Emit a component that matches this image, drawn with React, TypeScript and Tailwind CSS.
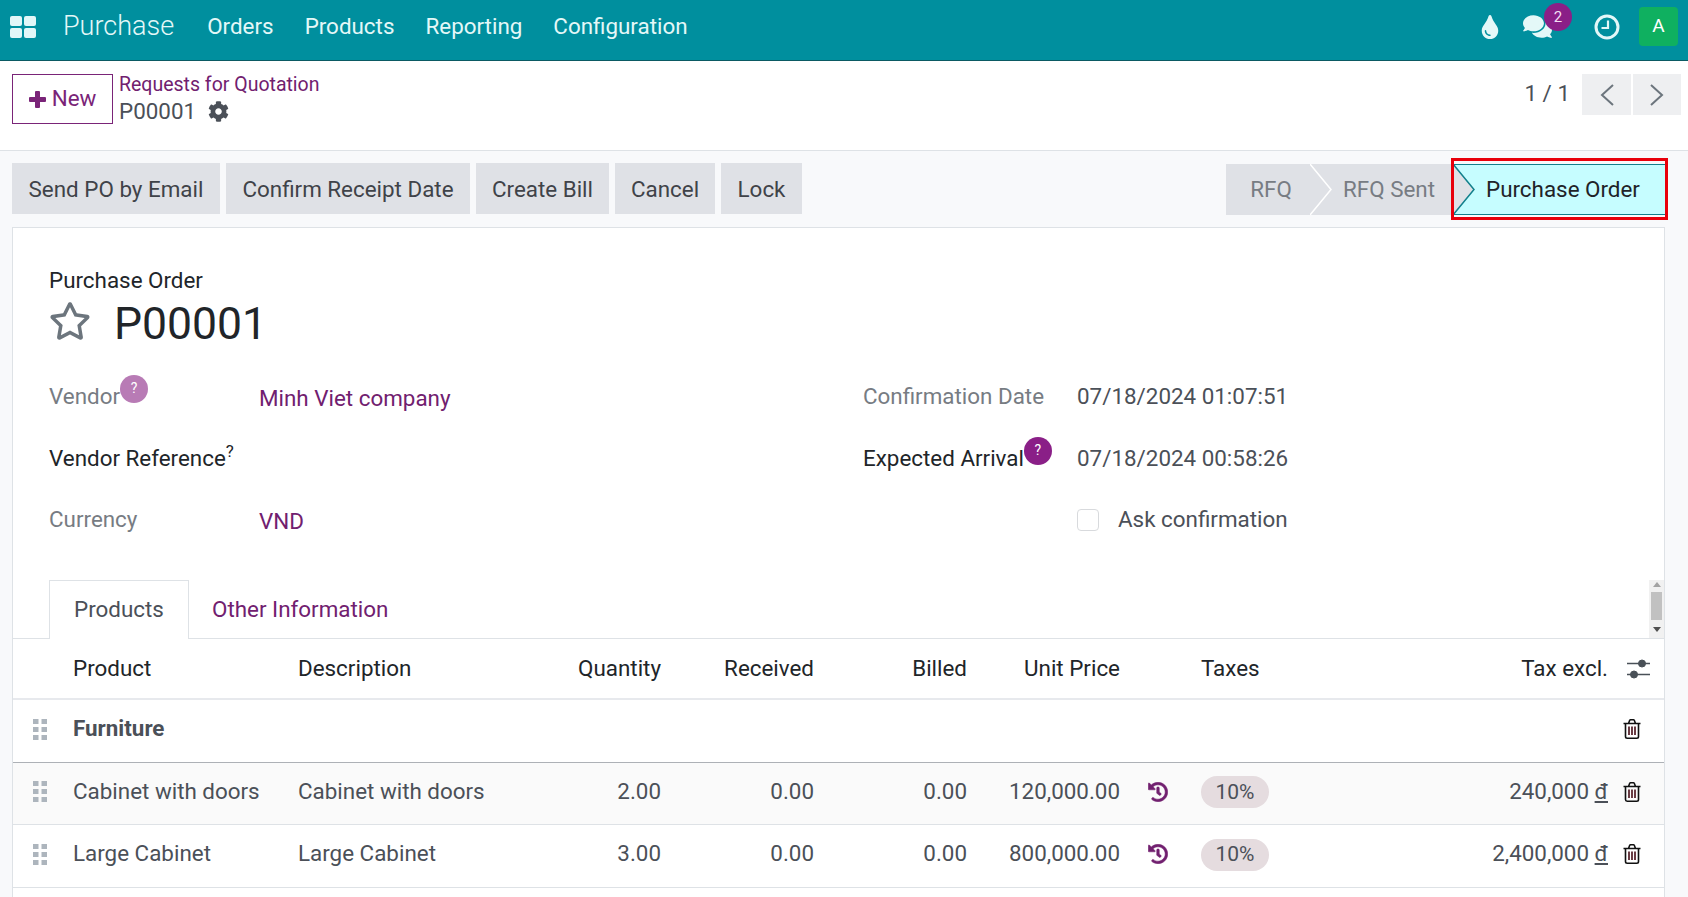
import React from "react";
import { FaCog, FaComments, FaHistory, FaRegStar, FaTint } from "react-icons/fa";

const Grip = () => (
  <svg width="14" height="21" viewBox="0 0 14 21" className="fill-[#adb5bd]">
    <rect x="0" y="0" width="5.500" height="5" />
    <rect x="8.500" y="0" width="5.500" height="5" />
    <rect x="0" y="8" width="5.500" height="5" />
    <rect x="8.500" y="8" width="5.500" height="5" />
    <rect x="0" y="16" width="5.500" height="5" />
    <rect x="8.500" y="16" width="5.500" height="5" />
  </svg>
);

const Clock = () => (
  <svg width="26" height="26" viewBox="0 0 26 26" fill="none" stroke="#e2f7f8" strokeWidth="3">
    <circle cx="13" cy="13" r="11" />
    <path d="M14 6.500v7.500H7.500" strokeWidth="2.200" />
  </svg>
);

const Trash = () => (
  <svg width="18" height="20" viewBox="0 0 18 20" fill="none" stroke="#111" strokeWidth="1.600">
    <path d="M0.500 4.500h17M2.500 4.500v13a1.700 1.700 0 0 0 1.700 1.700h9.600a1.700 1.700 0 0 0 1.700-1.700v-13M5.500 4.500l1.200-3.200a1 1 0 0 1 .9-.5h2.800a1 1 0 0 1 .9.500l1.200 3.200" />
    <path d="M6 7.500v8.500M9 7.500v8.500M12 7.500v8.500" stroke="#5a2730" strokeWidth="1.800" />
  </svg>
);

const Sliders = () => (
  <svg width="24" height="20" viewBox="0 0 24 20" className="fill-[#495057] stroke-[#495057]">
    <path d="M0 4.500h23M0 15.500h23" strokeWidth="1.600" />
    <circle cx="15" cy="4.500" r="3.500" />
    <circle cx="7" cy="15.500" r="3.500" />
  </svg>
);

const cols = "grid grid-cols-[60px_225px_263px_100px_153px_153px_153px_81px_199px_208px_57px] items-center";

const Row = ({ name, qty, price, total, bg, h }: { name: string; qty: string; price: string; total: string; bg: string; h: string }) => (
  <div className={`${cols} ${h} border-b border-[#dee2e6] pb-[4px] text-[#4b5058] ${bg}`}>
    <div className="pl-5">
      <Grip />
    </div>
    <div>{name}</div>
    <div>{name}</div>
    <div className="text-right">{qty}</div>
    <div className="text-right">0.00</div>
    <div className="text-right">0.00</div>
    <div className="text-right">{price}</div>
    <div className="pl-7 text-[#71206f]">
      <FaHistory size={20} className="stroke-[14]" />
    </div>
    <div>
      <span className="inline-flex h-8 w-[68px] items-center justify-center rounded-full bg-[#e5dcdf] text-[21px]">10%</span>
    </div>
    <div className="text-right whitespace-nowrap">
      {total} <span className="underline">đ</span>
    </div>
    <div className="pl-[15px]">
      <Trash />
    </div>
  </div>
);

const Badge = ({ color }: { color: string }) => (
  <span className={`absolute -top-[8px] -right-[28px] flex h-7 w-7 items-center justify-center rounded-full text-[14px] text-white ${color}`}>?</span>
);

export default function App() {
  return (
    <div className="flex h-screen flex-col overflow-hidden bg-[#f8f9fb] font-['Roboto',sans-serif] text-[22.4px] text-[#4b5058]">
      <nav className="flex h-[61px] shrink-0 items-center border-b border-[#0b5a63] bg-[#008f9e] pb-[7px] text-[#e4f8f8]">
        <svg width="26" height="22" viewBox="0 0 26 22" className="ml-[10px] fill-[#e2f7f8]">
          <rect x="0" y="0" width="12" height="10" rx="2" />
          <rect x="14" y="0" width="12" height="10" rx="2" />
          <rect x="0" y="12" width="12" height="10" rx="2" />
          <rect x="14" y="12" width="12" height="10" rx="2" />
        </svg>
        <span className="ml-[27px] text-[27px] font-light">Purchase</span>
        <div className="ml-[33px] flex gap-[31px]">
          <span>Orders</span>
          <span>Products</span>
          <span>Reporting</span>
          <span>Configuration</span>
        </div>
        <div className="ml-auto flex items-center pr-[10px]">
          <FaTint size={24} />
          <span className="relative ml-[21px]">
            <FaComments size={29} />
            <span className="absolute -top-[9px] -right-[20px] flex h-7 w-7 items-center justify-center rounded-full bg-[#8a1f87] text-[15px] text-[#f3dff3]">2</span>
          </span>
          <span className="ml-[42px]">
            <Clock />
          </span>
          <span className="ml-[19px] flex h-[39px] w-[39px] items-center justify-center rounded bg-[#0fb060] text-[19px] text-white">A</span>
        </div>
      </nav>

      <header className="flex h-[90px] shrink-0 items-start border-b border-[#dee2e6] bg-white pl-3 pr-[7px] pt-[13px]">
        <button className="flex h-[50px] w-[101px] items-center justify-center gap-[6px] border border-[#7a2478] text-[#7a2478]">
          <svg width="17" height="17" viewBox="0 0 17 17" className="fill-[#7a2478]">
            <rect x="6" y="0" width="5" height="17" rx="1" />
            <rect x="0" y="6" width="17" height="5" rx="1" />
          </svg>
          New
        </button>
        <div className="ml-[6px] leading-[27px]">
          <div className="-mt-[3px] text-[19.5px] text-[#71206f]">Requests for Quotation</div>
          <div className="flex items-center gap-[12px]">
            P00001
            <FaCog size={21} className="text-[#4b5058]" />
          </div>
        </div>
        <div className="ml-auto flex items-center">
          <span className="mr-[12px] pb-[2px]">1 / 1</span>
          <div className="flex gap-[2px] text-[#6c757d]">
            <span className="flex h-[41px] w-[49px] items-center justify-center bg-[#eeeff1]">
              <svg width="16" height="24" viewBox="0 0 16 24" fill="none" stroke="currentColor" strokeWidth="2"><path d="M14 2 3 12l11 10" /></svg>
            </span>
            <span className="flex h-[41px] w-[48px] items-center justify-center bg-[#eeeff1]">
              <svg width="16" height="24" viewBox="0 0 16 24" fill="none" stroke="currentColor" strokeWidth="2"><path d="m2 2 11 10L2 22" /></svg>
            </span>
          </div>
        </div>
      </header>

      <div className="flex h-[76px] shrink-0 items-start px-3 pt-3">
        <div className="flex gap-[6px] text-[#3f4349]">
          <span className="flex h-[51px] w-[208px] items-center justify-center bg-[#dfe1e6] pt-[2px]">Send PO by Email</span>
          <span className="flex h-[51px] w-[244px] items-center justify-center bg-[#dfe1e6] pt-[2px]">Confirm Receipt Date</span>
          <span className="flex h-[51px] w-[133px] items-center justify-center bg-[#dfe1e6] pt-[2px]">Create Bill</span>
          <span className="flex h-[51px] w-[100px] items-center justify-center bg-[#dfe1e6] pt-[2px]">Cancel</span>
          <span className="flex h-[51px] w-[81px] items-center justify-center bg-[#dfe1e6] pt-[2px]">Lock</span>
        </div>
        <div className="ml-auto mr-[11px] mt-px flex h-[51px] items-center">
          <span className="flex h-full w-[84px] items-center justify-center bg-[#dfe1e6] pl-[6px] text-[#777c83]">RFQ</span>
          <span className="relative flex h-full w-[143px] items-center bg-[#dfe1e6] pl-[33px] text-[#777c83]">
            RFQ Sent
            <svg width="24" height="51" viewBox="0 0 24 51" fill="none" stroke="white" strokeWidth="1.500" className="absolute left-0 top-0">
              <path d="M0 0 21 25.500 0 51" />
            </svg>
          </span>
          <span className="relative flex h-full w-[212px] items-center border-y border-[#12808c] bg-[#c6fdff] pl-[33px] text-[#1f2328]">
            Purchase Order
            <svg width="24" height="51" viewBox="0 0 24 51" className="absolute left-0 -top-px">
              <path d="M0 0 21 25.500 0 51Z" fill="#dfe1e6" />
              <path d="M0 0 21 25.500 0 51" fill="none" stroke="#12808c" strokeWidth="1.500" />
            </svg>
            <span className="absolute -bottom-[6px] -left-[2px] -right-[3px] -top-[7px] border-[3px] border-[#e8000b]" />
          </span>
        </div>
      </div>

      <main className="ml-3 w-[1653px] flex-1 border-x border-t border-[#dee2e6] bg-white">
        <div className="pl-9 pt-[38px]">
          <div className="text-[#212529] leading-7">Purchase Order</div>
          <div className="mt-[4px] flex h-[47px] items-center">
            <FaRegStar size={42} className="-mt-[2px] text-[#6c757d]" />
            <span className="ml-[23px] pt-[6px] text-[44.500px] text-[#212529]">P00001</span>
          </div>
        </div>

        <div className="mt-[21px] grid h-[185px] grid-cols-[814px_1fr] grid-rows-3 items-center pl-9">
          <div className="mt-px flex">
            <span className="w-[210px]"><span className="relative text-[#777c83]">Vendor<Badge color="bg-[#b87bb5]" /></span></span>
            <span className="mt-[2px] text-[#71206f]">Minh Viet company</span>
          </div>
          <div className="flex">
            <span className="w-[214px] text-[#777c83]">Confirmation Date</span>
            <span>07/18/2024 01:07:51</span>
          </div>
          <div className="flex text-[#212529]">
            <span className="w-[210px]">Vendor Reference<sup className="text-[17px]">?</sup></span>
          </div>
          <div className="flex">
            <span className="w-[214px] text-[#212529]"><span className="relative">Expected Arrival<Badge color="bg-[#8a1f87]" /></span></span>
            <span>07/18/2024 00:58:26</span>
          </div>
          <div className="mt-px flex">
            <span className="w-[210px] text-[#777c83]">Currency</span>
            <span className="mt-[2px] text-[#71206f]">VND</span>
          </div>
          <div className="flex items-center pl-[214px]">
            <span className="h-[22px] w-[22px] rounded border border-[#d8dadd]" />
            <span className="ml-[19px]">Ask confirmation</span>
          </div>
        </div>

        <div className="mt-[29px] flex h-[59px] items-end justify-between border-b border-[#dee2e6] pl-9">
          <div className="flex">
            <span className="-mb-px flex h-[59px] w-[140px] items-center justify-center border-x border-t border-[#dee2e6] bg-white">Products</span>
            <span className="flex h-[58px] items-center pl-[23px] pt-[2px] text-[#71206f]">Other Information</span>
          </div>
          <div className="flex h-[58px] w-[15px] flex-col items-center justify-between bg-[#f1f1f1] py-[2px]">
            <span className="h-0 w-0 border-x-[4px] border-b-[5px] border-x-transparent border-b-[#a3a3a3]" />
            <span className="-mt-[3px] h-[28px] w-[11px] bg-[#c1c1c1]" />
            <span className="mb-[4px] h-0 w-0 border-x-[4px] border-t-[5px] border-x-transparent border-t-[#505050]" />
          </div>
        </div>

        <div className={`${cols} h-[61px] border-b-2 border-[#e7e9ed] text-[#212529]`}>
          <div />
          <div>Product</div>
          <div>Description</div>
          <div className="text-right">Quantity</div>
          <div className="text-right">Received</div>
          <div className="text-right">Billed</div>
          <div className="text-right">Unit Price</div>
          <div />
          <div>Taxes</div>
          <div className="text-right">Tax excl.</div>
          <div className="pl-[19px]">
            <Sliders />
          </div>
        </div>

        <div className={`${cols} h-[63px] border-b border-[#adb1b6] pb-[4px]`}>
          <div className="pl-5">
            <Grip />
          </div>
          <div className="font-bold whitespace-nowrap">Furniture</div>
          <div className="col-start-11 pl-[15px]">
            <Trash />
          </div>
        </div>
        <Row name="Cabinet with doors" qty="2.00" price="120,000.00" total="240,000" bg="bg-[#fafafa]" h="h-[62px]" />
        <Row name="Large Cabinet" qty="3.00" price="800,000.00" total="2,400,000" bg="bg-white" h="h-[63px]" />
      </main>
    </div>
  );
}
